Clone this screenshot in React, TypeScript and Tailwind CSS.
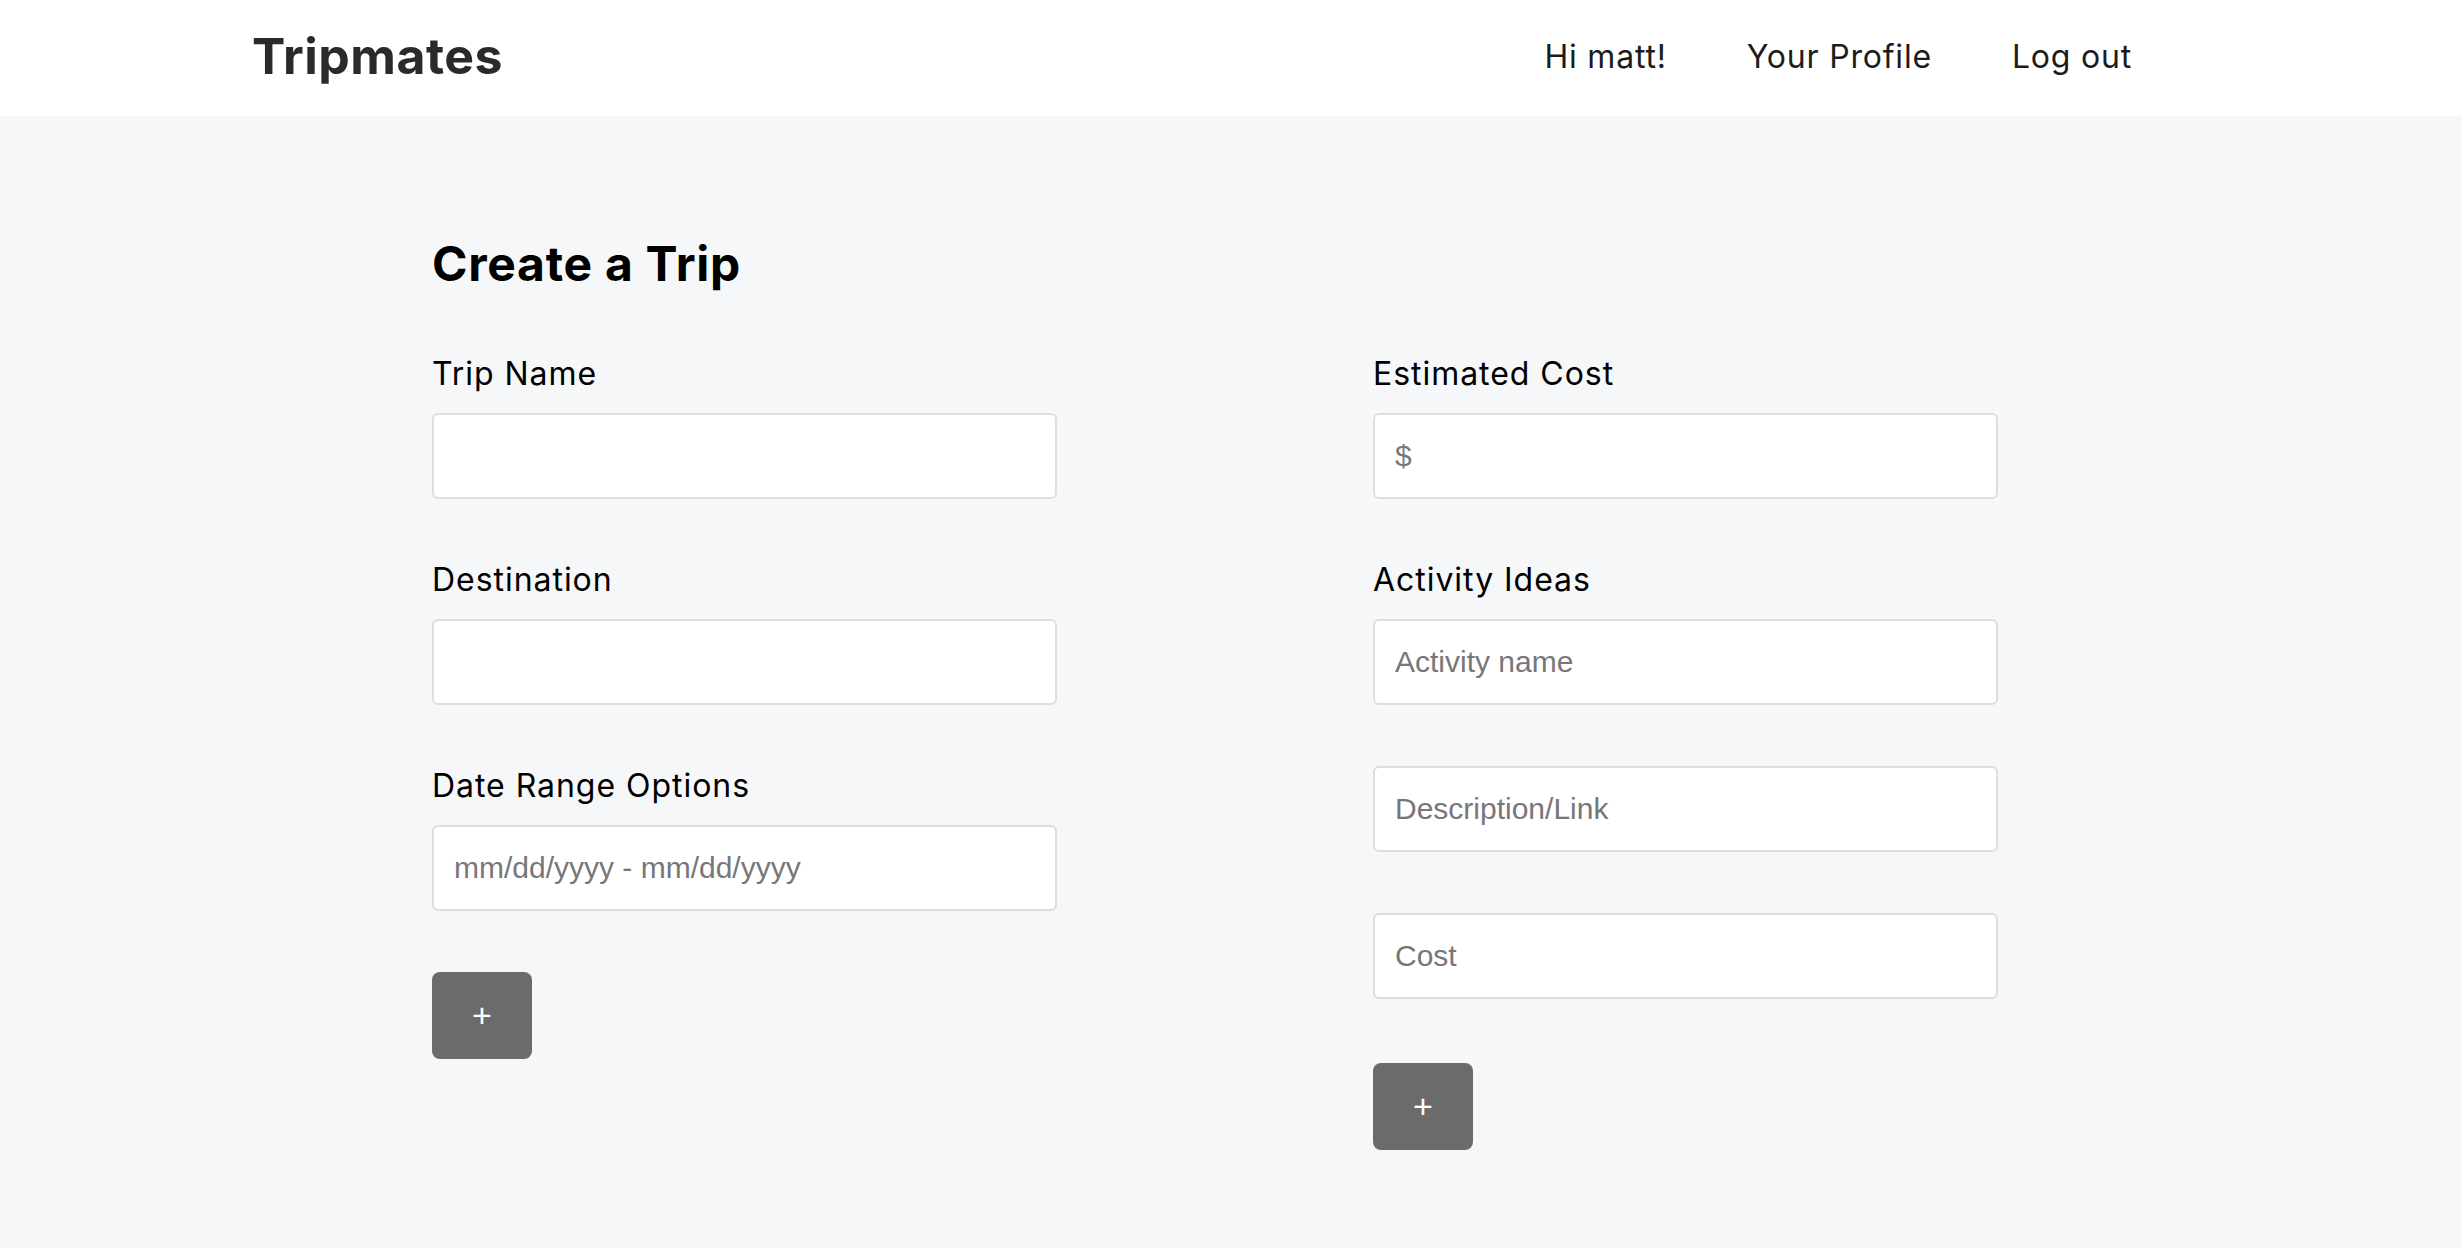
import React from "react";

const Field = ({ label, placeholder }: { label?: string; placeholder?: string }) => (
  <div className="flex flex-col">
    {label && (
      <label className="text-[32px] leading-[40px] text-black mb-[19px] tracking-[0.03em] font-['Inter',sans-serif]">
        {label}
      </label>
    )}
    <input
      type="text"
      placeholder={placeholder}
      className="w-[625px] h-[86px] bg-white border-2 border-[#dedede] rounded-[6px] px-[20px] text-[30px] font-['Liberation_Sans',sans-serif] text-[#333] placeholder:text-[#777] outline-none"
    />
  </div>
);

const AddButton = ({ className = "" }: { className?: string }) => (
  <button
    className={`w-[100px] h-[87px] bg-[#6b6b6b] rounded-[8px] text-white text-[34px] font-['Liberation_Sans',sans-serif] flex items-center justify-center ${className}`}
  >
    +
  </button>
);

export default function App() {
  return (
    <div className="min-h-[1248px] bg-[#f6f7f9] font-['Inter',sans-serif]">
      {/* Header */}
      <header className="h-[116px] bg-white flex items-center justify-between pl-[252px] pr-[330px]">
        <span className="text-[50px] font-bold text-[#2a2a2a] tracking-[0.01em] -mt-[4px]">Tripmates</span>
        <nav className="flex items-center gap-[80px] text-[32px] text-[#1c1c1c] tracking-[0.025em] -mt-[2px]">
          <a>Hi matt!</a>
          <a>Your Profile</a>
          <a>Log out</a>
        </nav>
      </header>

      {/* Form */}
      <main className="pl-[432px] pt-[124px]">
        <h1 className="text-[48px] leading-[48px] font-bold text-black tracking-[0.015em]">Create a Trip</h1>

        <div className="mt-[66px] flex gap-[316px]">
          <div className="flex flex-col gap-[61px]">
            <Field label="Trip Name" />
            <Field label="Destination" />
            <Field label="Date Range Options" placeholder="mm/dd/yyyy - mm/dd/yyyy" />
            <AddButton />
          </div>

          <div className="flex flex-col gap-[61px]">
            <Field label="Estimated Cost" placeholder="$" />
            <Field label="Activity Ideas" placeholder="Activity name" />
            <Field placeholder="Description/Link" />
            <Field placeholder="Cost" />
            <AddButton className="mt-[3px]" />
          </div>
        </div>
      </main>
    </div>
  );
}
